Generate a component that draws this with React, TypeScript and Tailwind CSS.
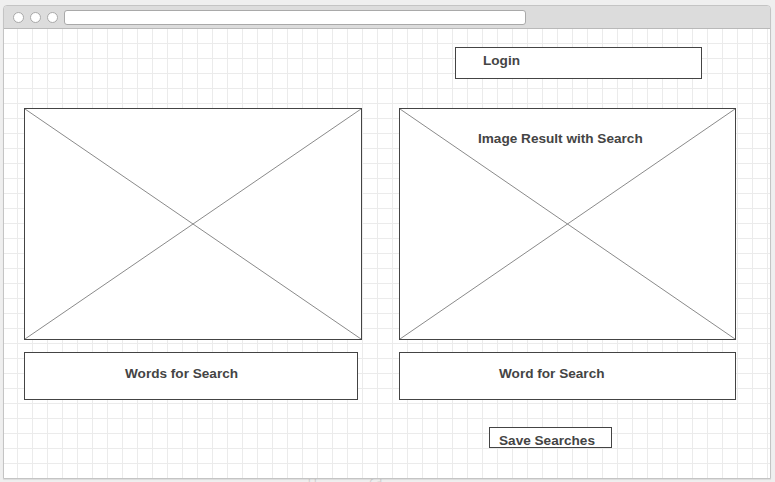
import React from "react";

const gridStyle =
  "bg-white bg-[linear-gradient(to_right,#ebebeb_1px,transparent_1px),linear-gradient(to_bottom,#ebebeb_1px,transparent_1px)] bg-[length:15px_15px] bg-[position:13px_14px]";

function Cross() {
  return (
    <svg
      className="absolute inset-0 h-full w-full"
      preserveAspectRatio="none"
      viewBox="0 0 100 100"
    >
      <line x1="0" y1="0" x2="100" y2="100" stroke="#8a8a8a" strokeWidth="1" vectorEffect="non-scaling-stroke" />
      <line x1="100" y1="0" x2="0" y2="100" stroke="#8a8a8a" strokeWidth="1" vectorEffect="non-scaling-stroke" />
    </svg>
  );
}

export default function App() {
  return (
    <div
      className="relative h-[482px] w-[775px] overflow-hidden bg-[#efefef] text-[#444]"
      style={{ fontFamily: '"Liberation Sans", Arial, sans-serif' }}
    >
      <div className="absolute left-[270px] top-[462px] text-[44px] font-bold tracking-[2px] text-transparent [-webkit-text-stroke:1px_#cfcfcf]">
        wireframes
      </div>
      <div className="relative z-10 ml-[3px] mt-[5px] flex h-[474px] w-[768px] flex-col overflow-hidden rounded-t-[4px] border border-[#c4c4c4] shadow-[0_1px_1px_rgba(0,0,0,0.08)]">
        <div className="flex h-[23px] shrink-0 items-center border-b border-[#b9b9b9] bg-[#dcdcdc] pl-[9px] pt-[1px]">
          <div className="flex gap-[6px]">
            <div className="h-[11px] w-[11px] rounded-full border border-[#a9a9a9] bg-white" />
            <div className="h-[11px] w-[11px] rounded-full border border-[#a9a9a9] bg-white" />
            <div className="h-[11px] w-[11px] rounded-full border border-[#a9a9a9] bg-white" />
          </div>
          <div className="ml-[6px] h-[15px] w-[462px] rounded-[3px] border border-[#a9a9a9] bg-white" />
        </div>
        <div className={`flex-1 pl-[20px] pt-[18px] ${gridStyle}`}>
          <div className="ml-[431px] h-[32px] w-[247px] border border-[#444] bg-white pl-[27px] pt-[5px] text-[13.6px] font-bold leading-4">
            Login
          </div>
          <div className="mt-[29px] flex gap-[37px]">
            <div className="relative h-[232px] w-[338px] border border-[#444] bg-white">
              <Cross />
            </div>
            <div className="relative h-[232px] w-[337px] border border-[#444] bg-white">
              <Cross />
              <div className="relative pl-[78px] pt-[22px] text-[13.6px] font-bold leading-4">
                Image Result with Search
              </div>
            </div>
          </div>
          <div className="mt-[12px] flex gap-[41px]">
            <div className="h-[48px] w-[334px] border border-[#444] bg-white pl-[100px] pt-[13px] text-[13.6px] font-bold leading-4">
              Words for Search
            </div>
            <div className="h-[48px] w-[337px] border border-[#444] bg-white pl-[99px] pt-[13px] text-[13.6px] font-bold leading-4">
              Word for Search
            </div>
          </div>
          <div className="ml-[465px] mt-[27px] h-[21px] w-[123px] whitespace-nowrap border border-[#444] bg-white pl-[9px] pt-[5px] text-[13.6px] font-bold leading-4">
            Save Searches
          </div>
        </div>
      </div>
    </div>
  );
}
